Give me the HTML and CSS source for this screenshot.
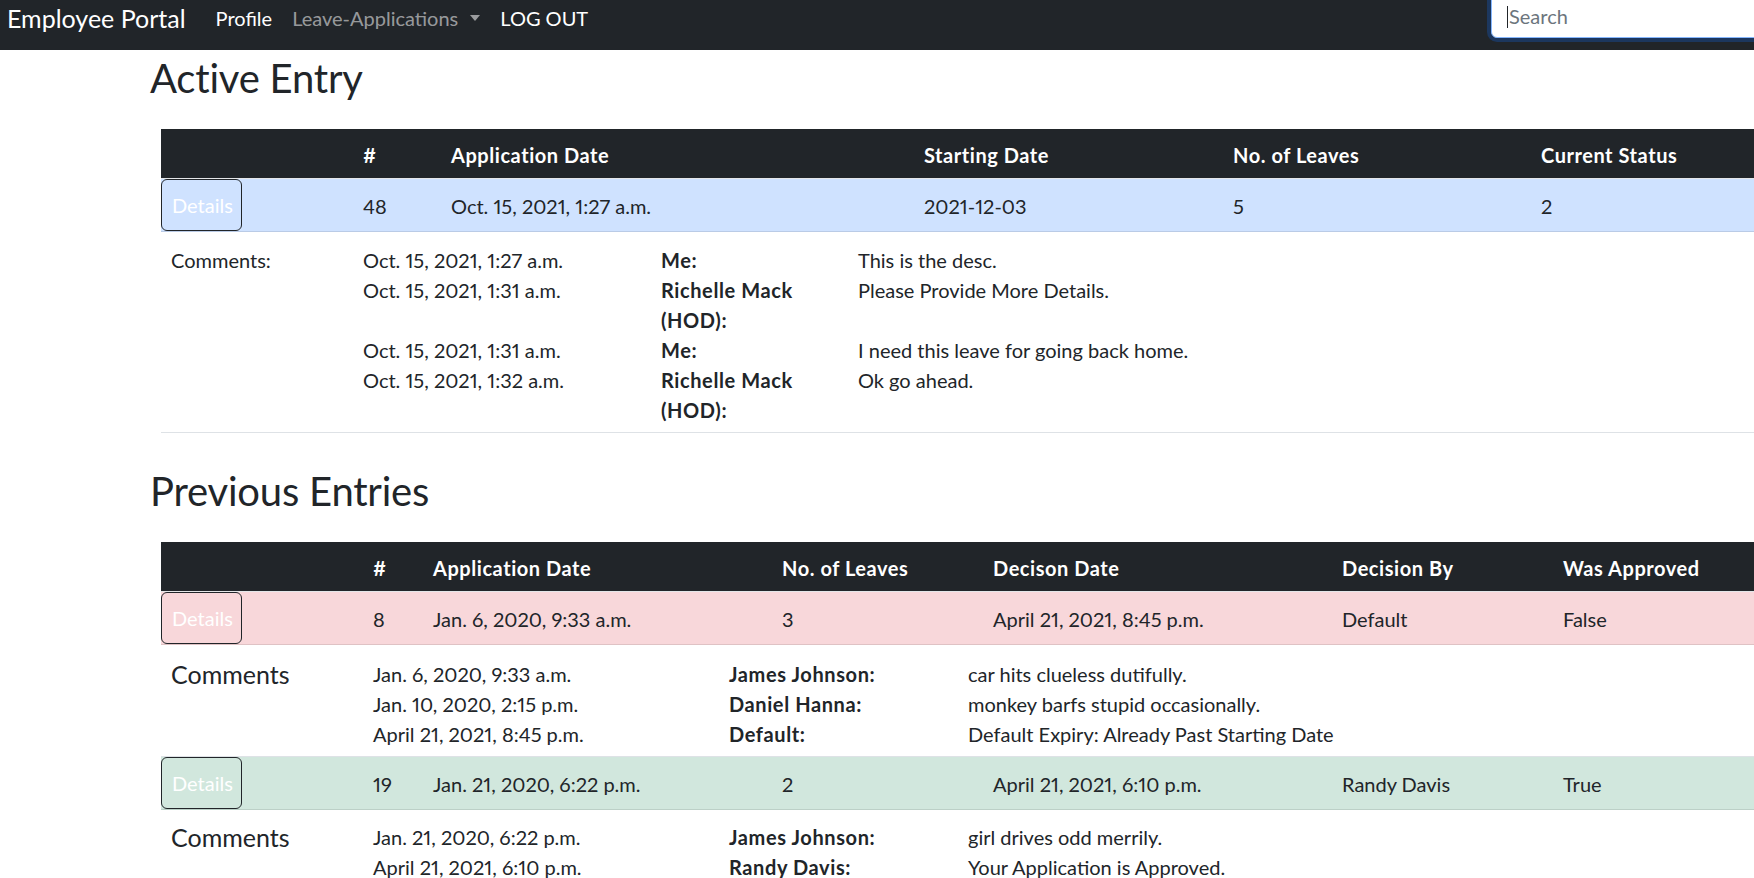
FILE: index.html
```html
<!DOCTYPE html>
<html lang="en">
<head>
<meta charset="utf-8">
<title>Employee Portal</title>
<link rel="stylesheet" href="styles.css">
</head>
<body>
<nav class="navbar">
  <a class="brand" href="#">Employee Portal</a>
  <ul class="nav">
    <li><a class="nav-link" href="#">Profile</a></li>
    <li><a class="nav-link muted dropdown" href="#">Leave-Applications</a></li>
    <li><a class="nav-link" href="#">LOG OUT</a></li>
  </ul>
  <form class="search">
    <input class="search-input" type="search" placeholder="Search">
  </form>
</nav>

<main class="page">
  <h2 class="section-title first">Active Entry</h2>
  <table class="table t-active">
    <colgroup>
      <col class="c-btn1"><col class="c-a1"><col class="c-a2"><col class="c-a3"><col class="c-a4"><col class="c-a5">
    </colgroup>
    <thead>
      <tr><th></th><th>#</th><th>Application Date</th><th>Starting Date</th><th>No. of Leaves</th><th>Current Status</th></tr>
    </thead>
    <tbody>
      <tr class="row-primary">
        <td class="btn-cell"><button class="btn-details" type="button">Details</button></td>
        <td>48</td><td>Oct. 15, 2021, 1:27 a.m.</td><td>2021-12-03</td><td>5</td><td>2</td>
      </tr>
      <tr class="detail-row">
        <td colspan="6" class="detail-cell">
          <div class="comments comments-active">
            <div class="label label-small" style="grid-row: span 4">Comments:</div>
            <div>Oct. 15, 2021, 1:27 a.m.</div><div class="who">Me:</div><div>This is the desc.</div>
            <div>Oct. 15, 2021, 1:31 a.m.</div><div class="who">Richelle Mack (HOD):</div><div>Please Provide More Details.</div>
            <div>Oct. 15, 2021, 1:31 a.m.</div><div class="who">Me:</div><div>I need this leave for going back home.</div>
            <div>Oct. 15, 2021, 1:32 a.m.</div><div class="who">Richelle Mack (HOD):</div><div>Ok go ahead.</div>
          </div>
        </td>
      </tr>
    </tbody>
  </table>

  <h2 class="section-title">Previous Entries</h2>
  <table class="table t-prev">
    <colgroup>
      <col class="c-btn2"><col class="c-p1"><col class="c-p2"><col class="c-p3"><col class="c-p4"><col class="c-p5"><col class="c-p6">
    </colgroup>
    <thead>
      <tr><th></th><th>#</th><th>Application Date</th><th>No. of Leaves</th><th>Decison Date</th><th>Decision By</th><th>Was Approved</th></tr>
    </thead>
    <tbody>
      <tr class="row-danger">
        <td class="btn-cell"><button class="btn-details" type="button">Details</button></td>
        <td>8</td><td>Jan. 6, 2020, 9:33 a.m.</td><td>3</td><td>April 21, 2021, 8:45 p.m.</td><td>Default</td><td>False</td>
      </tr>
      <tr class="detail-row">
        <td colspan="7" class="detail-cell d-first">
          <div class="comments comments-prev">
            <div class="label label-big" style="grid-row: span 3">Comments</div>
            <div>Jan. 6, 2020, 9:33 a.m.</div><div class="who">James Johnson:</div><div>car hits clueless dutifully.</div>
            <div>Jan. 10, 2020, 2:15 p.m.</div><div class="who">Daniel Hanna:</div><div>monkey barfs stupid occasionally.</div>
            <div>April 21, 2021, 8:45 p.m.</div><div class="who">Default:</div><div>Default Expiry: Already Past Starting Date</div>
          </div>
        </td>
      </tr>
      <tr class="row-success">
        <td class="btn-cell"><button class="btn-details" type="button">Details</button></td>
        <td>19</td><td>Jan. 21, 2020, 6:22 p.m.</td><td>2</td><td>April 21, 2021, 6:10 p.m.</td><td>Randy Davis</td><td>True</td>
      </tr>
      <tr class="detail-row">
        <td colspan="7" class="detail-cell d-second">
          <div class="comments comments-prev">
            <div class="label label-big" style="grid-row: span 2">Comments</div>
            <div>Jan. 21, 2020, 6:22 p.m.</div><div class="who">James Johnson:</div><div>girl drives odd merrily.</div>
            <div>April 21, 2021, 6:10 p.m.</div><div class="who">Randy Davis:</div><div>Your Application is Approved.</div>
          </div>
        </td>
      </tr>
    </tbody>
  </table>
</main>
</body>
</html>
```
FILE: styles.css
```css
html {
  overflow: hidden;
}

body {
  margin: 0;
  font-family: Lato, "Open Sans", sans-serif;
  font-size: 20px;
  line-height: 30px;
  font-variant-numeric: proportional-nums;
  color: #212529;
  background: #fff;
}

/* ---------- navbar ---------- */
.navbar {
  display: flex;
  align-items: center;
  box-sizing: border-box;
  height: 50px;
  padding: 0 0 15px 7px;
  background: #212529;
}

.brand {
  font-size: 25px;
  line-height: 30px;
  color: #fff;
  text-decoration: none;
  margin-right: 20px;
}

.nav {
  display: flex;
  list-style: none;
  margin: 0;
  padding: 0;
}

.nav-link {
  display: flex;
  align-items: center;
  padding: 0 10px;
  color: #fff;
  text-decoration: none;
}

.nav-link.muted {
  color: rgba(255, 255, 255, 0.55);
}

.nav-link.dropdown::after {
  content: "";
  margin-left: 12px;
  border-top: 6px solid rgba(255, 255, 255, 0.55);
  border-left: 5px solid transparent;
  border-right: 5px solid transparent;
}

.search {
  position: relative;
  align-self: flex-start;
  margin: -6px -37px 0 auto;
}

.search::before {
  content: "";
  position: absolute;
  left: 16px;
  top: 12px;
  width: 1px;
  height: 22px;
  background: #212529;
}

.search-input {
  box-sizing: border-box;
  width: 300px;
  height: 44px;
  padding: 0 12px 0 17px;
  font-family: inherit;
  font-size: 20px;
  color: #212529;
  background: #fff;
  border: 1px solid #86b7fe;
  border-radius: 6px;
  box-shadow: 0 0 0 4px #1c375e;
  outline: none;
}

.search-input::placeholder {
  color: #6c757d;
}

/* ---------- page ---------- */
.page {
  padding-left: 150px;
}

.section-title {
  margin: 34px 0 27px;
  font-size: 40px;
  line-height: 48px;
  font-weight: 400;
  letter-spacing: -0.2px;
}

.section-title.first {
  margin-top: 4px;
}

.table {
  margin-left: 11px;
  border-collapse: collapse;
  table-layout: fixed;
}

.t-active { width: 1620px; }
.t-prev { width: 1622px; }

.c-btn1 { width: 192px; }
.c-a1 { width: 88px; }
.c-a2 { width: 473px; }
.c-a3 { width: 309px; }
.c-a4 { width: 308px; }
.c-a5 { width: 250px; }

.c-btn2 { width: 202px; }
.c-p1 { width: 60px; }
.c-p2 { width: 349px; }
.c-p3 { width: 211px; }
.c-p4 { width: 349px; }
.c-p5 { width: 221px; }
.c-p6 { width: 230px; }

.table th {
  padding: 11px 10px 8px;
  text-align: left;
  font-weight: 700;
  letter-spacing: 0.55px;
  color: #fff;
  background: #212529;
  border-bottom: 1px solid #e4e6e8;
  white-space: nowrap;
}

.table td {
  padding: 12px 10px 10px;
  vertical-align: top;
  white-space: nowrap;
}

.table td.btn-cell {
  padding: 0;
}

.btn-details {
  display: block;
  box-sizing: border-box;
  width: 81px;
  height: 52px;
  padding: 0 10px;
  font-family: inherit;
  font-size: 20px;
  color: #fff;
  background: transparent;
  border: 1px solid #212529;
  border-radius: 6px;
}

.row-primary td {
  background: #cfe2ff;
  border-bottom: 1px solid #bacbe6;
}

.row-danger td {
  background: #f8d7da;
  border-bottom: 1px solid #dfc2c4;
}

.row-success td {
  background: #d1e7dd;
  border-bottom: 1px solid #bcd0c7;
}

.table td.detail-cell {
  padding: 13px 0 7px;
  border-bottom: 1px solid #dee2e6;
}

.table td.detail-cell.d-first {
  padding: 14px 0 7px;
}

.table td.detail-cell.d-second {
  padding: 12px 0 6px;
}

.comments {
  display: grid;
  white-space: normal;
}

.comments-active {
  grid-template-columns: 202px 298px 197px 1fr;
}

.comments-prev {
  grid-template-columns: 212px 356px 239px 1fr;
}

.label {
  padding-left: 10px;
}

.label-big {
  font-size: 25px;
  line-height: 30px;
}

.who {
  font-weight: 700;
  letter-spacing: 0.6px;
  padding-right: 20px;
}
```
